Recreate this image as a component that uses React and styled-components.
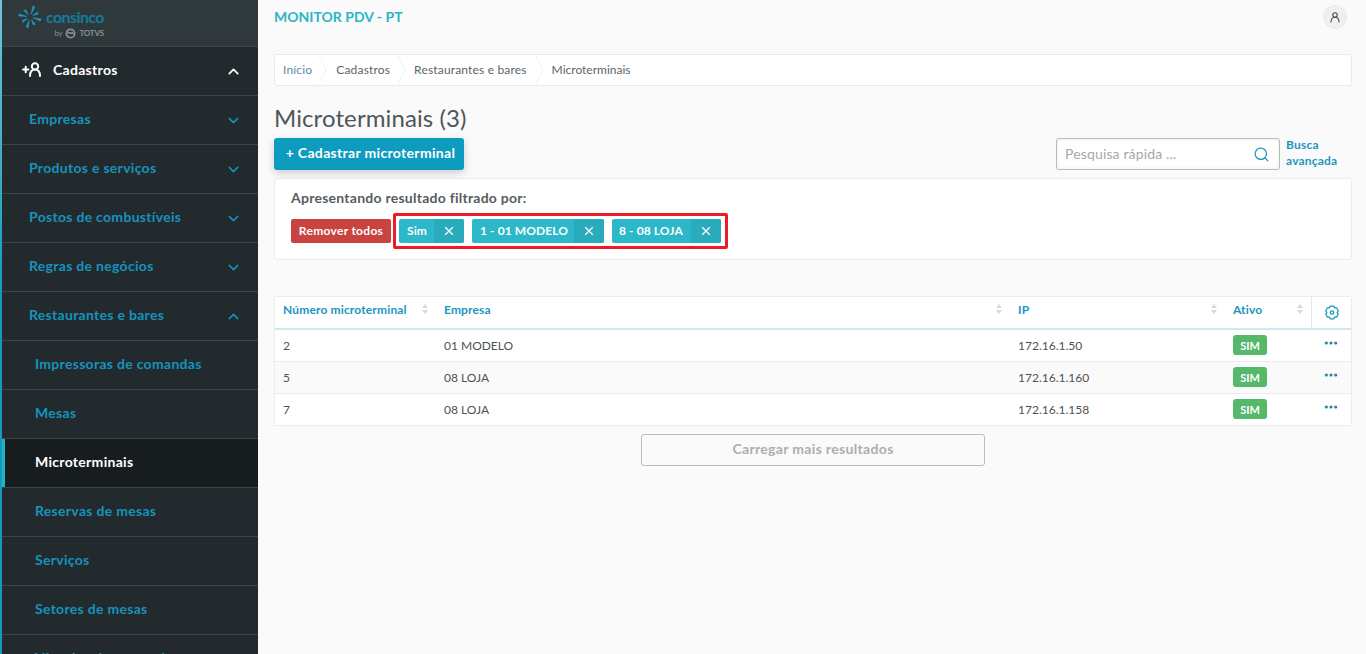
import React from "react";
import styled, { createGlobalStyle } from "styled-components";
import { ChevronDown, ChevronUp, Search, X, Ellipsis } from "lucide-react";

const GlobalStyle = createGlobalStyle`
  html, body { margin: 0; padding: 0; height: 100%; }
  body {
    font-family: Lato, "Open Sans", sans-serif;
    background: #fafafa;
    overflow: hidden;
  }
`;

const Layout = styled.div`
  display: flex;
  width: 1366px;
  height: 654px;
  overflow: hidden;
`;

const Sidebar = styled.aside`
  width: 258px;
  flex: none;
  height: 654px;
  overflow: hidden;
  background: #232a2d;
  border-left: 2px solid;
  border-image: linear-gradient(#6fc6d8, #1899b9 45%) 1;
  box-sizing: border-box;
`;

const LogoBar = styled.div`
  height: 47px;
  box-sizing: border-box;
  background: #2f393c;
  border-bottom: 1px solid #3c4649;
  display: flex;
  padding: 5px 0 0 16px;
  gap: 4px;
`;

const LogoWords = styled.div`
  display: flex;
  flex-direction: column;
  align-items: flex-end;
`;

const LogoName = styled.span`
  color: #17799c;
  font-size: 16px;
  font-weight: 700;
  letter-spacing: -0.6px;
  line-height: 16px;
  margin-top: 4px;
`;

const LogoBy = styled.span`
  display: flex;
  align-items: center;
  gap: 3px;
  color: #8a9194;
  font-size: 8px;
  font-weight: 700;
  letter-spacing: -0.2px;
  margin-top: 3px;
  line-height: 11px;
`;

const LogoSmall = styled.span`
  font-size: 7.5px;
  font-weight: 400;
  letter-spacing: 0;
`;

const MenuRow = styled.div`
  height: 49px;
  box-sizing: border-box;
  display: flex;
  align-items: center;
  justify-content: space-between;
  padding: 0 16px 3px ${(p) => (p.$sub ? 33 : 27)}px;
  border-bottom: 1px solid #3b4447;
  color: ${(p) => (p.$active ? "#fff" : "#1593bd")};
  background: ${(p) => (p.$active ? "#171c1f" : "transparent")};
  font-size: 14px;
  font-weight: 700;
  letter-spacing: 0.3px;
  box-shadow: ${(p) => (p.$active ? "inset 3px 0 0 #22b3c4" : "none")};
`;

const TopRow = styled(MenuRow)`
  color: #fff;
  padding-left: 20px;
`;

const TopLabel = styled.span`
  display: flex;
  align-items: center;
  gap: 11px;
`;

const Chevron = styled.span`
  display: flex;
  margin-top: 3px;
`;

const Main = styled.main`
  flex: 1;
  min-width: 0;
  padding: 0 14px 0 16px;
`;

const TopBar = styled.header`
  height: 36px;
  box-sizing: border-box;
  display: flex;
  align-items: center;
  justify-content: space-between;
  padding: 0 5px 2px 0;
  margin-bottom: 18px;
`;

const AppTitle = styled.span`
  color: #2bb5c6;
  font-size: 14px;
  font-weight: 700;
  margin-top: -2px;
`;

const Avatar = styled.span`
  width: 24px;
  height: 24px;
  border-radius: 50%;
  background: #f0f0f0;
  border: 1px solid #e8e8e8;
  box-sizing: border-box;
  display: flex;
  align-items: center;
  justify-content: center;
`;

const Breadcrumb = styled.nav`
  height: 32px;
  box-sizing: border-box;
  background: #fff;
  border: 1px solid #eaeaea;
  border-radius: 3px;
  display: flex;
  align-items: center;
  font-size: 12px;
  overflow: hidden;
`;

const Crumb = styled.span`
  position: relative;
  height: 100%;
  box-sizing: border-box;
  display: flex;
  align-items: center;
  padding: 0 ${(p) => p.$pr}px 2px ${(p) => p.$pl}px;
  color: ${(p) => (p.$link ? "#5b8aa5" : "#5c6468")};
  letter-spacing: ${(p) => (p.$last ? "0" : "0.17px")};
  &::after {
    content: "";
    display: ${(p) => (p.$last ? "none" : "block")};
    position: absolute;
    right: 0;
    top: -1px;
    width: 8px;
    height: 32px;
    background:
      linear-gradient(to top right, transparent 49%, #e6e6e6 49%, #e6e6e6 53%, transparent 53%) top / 100% 50% no-repeat,
      linear-gradient(to bottom right, transparent 49%, #e6e6e6 49%, #e6e6e6 53%, transparent 53%) bottom / 100% 50% no-repeat;
  }
`;

const PageTitle = styled.h1`
  margin: 17px 0 0;
  font-size: 24px;
  line-height: 30px;
  font-weight: 400;
  letter-spacing: 0.1px;
  color: #4e565a;
`;

const ActionRow = styled.div`
  display: flex;
  justify-content: space-between;
  align-items: flex-start;
  margin-top: 5px;
  height: 40px;
`;

const PrimaryButton = styled.button`
  width: 190px;
  height: 32px;
  border: 0;
  border-radius: 3px;
  background: #0d9bc0;
  color: #fff;
  font: 700 14px Lato, sans-serif;
  letter-spacing: 0.33px;
  box-shadow: 0 3px 8px rgba(0, 0, 0, 0.18);
  padding: 0 0 4px 3px;
`;

const SearchArea = styled.div`
  display: flex;
  gap: 6px;
  padding-right: 14px;
`;

const SearchBox = styled.div`
  width: 224px;
  height: 32px;
  box-sizing: border-box;
  background: #fff;
  border: 1px solid #b5bebf;
  border-radius: 3px;
  box-shadow: inset 0 0 4px rgba(0, 0, 0, 0.08);
  display: flex;
  align-items: center;
  justify-content: space-between;
  padding: 0 9px 2px 8px;
  font-size: 14px;
  color: #a5a9ab;
  letter-spacing: 0.15px;
`;

const SearchIcon = styled(Search)`
  margin-top: 2px;
`;

const AdvancedLink = styled.span`
  width: 52px;
  color: #1d96bd;
  font-size: 12px;
  font-weight: 700;
  letter-spacing: 0.2px;
  line-height: 16px;
  margin-top: -1px;
`;

const FilterCard = styled.section`
  height: 82px;
  box-sizing: border-box;
  background: #fff;
  border: 1px solid #ececec;
  border-radius: 3px;
  padding: 11px 16px 0;
`;

const FilterTitle = styled.div`
  font-size: 14px;
  font-weight: 700;
  letter-spacing: 0.25px;
  color: #565d60;
  line-height: 16px;
`;

const FilterRow = styled.div`
  display: flex;
  align-items: center;
  margin-top: 7px;
  gap: 2px;
`;

const RemoveAll = styled.span`
  width: 100px;
  height: 24px;
  box-sizing: border-box;
  padding-bottom: 2px;
  border-radius: 2px;
  background: #c9433f;
  color: #fff;
  font-size: 12px;
  font-weight: 700;
  letter-spacing: 0.3px;
  display: flex;
  align-items: center;
  justify-content: center;
`;

const Highlight = styled.div`
  display: flex;
  gap: 8px;
  border: 3px solid #ed1c24;
  border-radius: 2px;
  padding: 3px 4px 3px 3px;
  height: 36px;
  box-sizing: border-box;
`;

const Tag = styled.span`
  display: flex;
  height: 24px;
  border-radius: 2px;
  overflow: hidden;
  background: #2cb8c8;
  color: #fff;
  font-size: 12px;
  font-weight: 700;
  letter-spacing: 0.1px;
`;

const TagText = styled.span`
  width: ${(p) => p.$w}px;
  box-sizing: border-box;
  display: flex;
  align-items: center;
  padding: 0 0 2px ${(p) => p.$pl}px;
`;

const TagClose = styled.span`
  width: 30px;
  background: #2aabbb;
  display: flex;
  align-items: center;
  justify-content: center;
`;

const TableCard = styled.div`
  margin-top: 36px;
  background: #fff;
  border: 1px solid #ececec;
  border-radius: 3px;
  font-size: 12px;
`;

const Row = styled.div`
  display: grid;
  grid-template-columns: 161px 574px 215px 86px 1fr;
  height: ${(p) => (p.$head ? "33px" : p.$last ? "31px" : "32px")};
  box-sizing: border-box;
  align-items: center;
  background: ${(p) => (p.$alt ? "#fafafa" : "#fff")};
  border-bottom: ${(p) => (p.$head ? "2px solid #cdeaf1" : p.$last ? "0" : "1px solid #ececec")};
  color: #4c5356;
`;

const HeadCell = styled.div`
  height: 100%;
  box-sizing: border-box;
  display: flex;
  align-items: center;
  justify-content: ${(p) => (p.$center ? "center" : "space-between")};
  padding: ${(p) => (p.$center ? "0" : "0 8px 7px 8px")};
  color: #1d96bd;
  font-weight: 700;
  font-size: 12px;
  letter-spacing: 0.15px;
  border-left: ${(p) => (p.$center ? "1px solid #e6e6e6" : "0")};
`;

const SortMark = styled.span`
  display: flex;
  flex-direction: column;
  gap: 2px;
  &::before, &::after {
    content: "";
    width: 0;
    height: 0;
    border-left: 3.5px solid transparent;
    border-right: 3.5px solid transparent;
  }
  &::before { border-bottom: 4px solid #d6d9da; }
  &::after { border-top: 4px solid #d6d9da; }
`;

const Cell = styled.div`
  padding: 0 8px;
  display: flex;
  align-items: center;
`;

const DotsCell = styled.div`
  display: flex;
  justify-content: center;
  align-self: start;
  padding-top: 5px;
  color: #2a7fa0;
`;

const Badge = styled.span`
  width: 34px;
  height: 20px;
  margin-top: -1px;
  border-radius: 3px;
  background: #55b96b;
  color: #fff;
  font-size: 11px;
  font-weight: 700;
  display: flex;
  align-items: center;
  justify-content: center;
`;

const MoreRow = styled.div`
  display: flex;
  justify-content: center;
  margin-top: 8px;
`;

const MoreButton = styled.button`
  width: 344px;
  height: 32px;
  background: transparent;
  border: 1px solid #b9bfc0;
  border-radius: 3px;
  color: #a9afb1;
  font: 700 14px Lato, sans-serif;
  letter-spacing: 0.33px;
  padding: 0 0 4px;
`;

const menu = [
  { label: "Empresas", chevron: "down" },
  { label: "Produtos e serviços", chevron: "down" },
  { label: "Postos de combustíveis", chevron: "down" },
  { label: "Regras de negócios", chevron: "down" },
  { label: "Restaurantes e bares", chevron: "up" },
  { label: "Impressoras de comandas", sub: true },
  { label: "Mesas", sub: true },
  { label: "Microterminais", sub: true, active: true },
  { label: "Reservas de mesas", sub: true },
  { label: "Serviços", sub: true },
  { label: "Setores de mesas", sub: true },
  { label: "Vínculos de comandas", sub: true },
];

const rows = [
  { id: "2", empresa: "01 MODELO", ip: "172.16.1.50" },
  { id: "5", empresa: "08 LOJA", ip: "172.16.1.160" },
  { id: "7", empresa: "08 LOJA", ip: "172.16.1.158" },
];

const tags = [
  { label: "Sim", w: 35, pl: 8 },
  { label: "1 - 01 MODELO", w: 102, pl: 8 },
  { label: "8 - 08 LOJA", w: 79, pl: 7 },
];

const logoRays = [
  [20, 11.5], [62, 9], [105, 11.5], [150, 9], [195, 11], [238, 9], [280, 11.5], [322, 9],
];

function LogoMark() {
  return (
    <svg width="24" height="24" viewBox="0 0 24 24">
      {logoRays.map(([a, r]) => (
        <path key={a} d={`M12 ${12 - 3} L11 ${12 - r} L13.2 ${12 - r + 0.6} Z`} fill="#1b9dbf" stroke="#1b9dbf" strokeWidth="0.5" strokeLinejoin="round" transform={`rotate(${a} 12 12)`} />
      ))}
    </svg>
  );
}

function AddUserIcon() {
  return (
    <svg width="20" height="15" viewBox="0 0 20 15" fill="none" stroke="#fff" strokeWidth="2" strokeLinecap="round">
      <path d="M1 7.5h5.4M3.7 4.8v5.4" />
      <circle cx="13" cy="4.4" r="3.2" />
      <path d="M8 14c0-4 1.6-6.6 5-6.6S18 10 18 14" />
    </svg>
  );
}

function AvatarIcon() {
  return (
    <svg width="10" height="11" viewBox="0 0 10 11" fill="none" stroke="#4a4f52" strokeWidth="1.1" strokeLinecap="round">
      <circle cx="5" cy="3" r="2.2" />
      <path d="M1 10c0-3 1.4-4.8 4-4.8S9 7 9 10" />
    </svg>
  );
}

function GearIcon() {
  return (
    <svg width="14" height="15" viewBox="0 0 14 15" fill="none" stroke="#1d96bd" strokeWidth="1.3" strokeLinejoin="round">
      <path d="M5.2 1.2h3.6l.8 1.7 1.9-.1 1.7 3-1.1 1.7 1.1 1.7-1.7 3-1.9-.1-.8 1.7H5.2l-.8-1.7-1.9.1-1.7-3 1.1-1.7-1.1-1.7 1.7-3 1.9.1z" />
      <circle cx="7" cy="7.5" r="1.7" />
    </svg>
  );
}

function App() {
  return (
    <Layout>
      <GlobalStyle />
      <Sidebar>
        <LogoBar>
          <LogoMark />
          <LogoWords>
            <LogoName>consinco</LogoName>
            <LogoBy>
              <LogoSmall>by</LogoSmall>
              <svg width="11" height="11" viewBox="0 0 11 11" fill="none" stroke="#8a9194" strokeWidth="1.7">
                <circle cx="5.5" cy="5.5" r="4.2" />
                <path d="M2.5 5c2 -.8 4 .8 6 0" />
              </svg>
              TOTVS
            </LogoBy>
          </LogoWords>
        </LogoBar>
        <TopRow>
          <TopLabel>
            <AddUserIcon />
            Cadastros
          </TopLabel>
          <Chevron>
            <ChevronUp size={17} strokeWidth={2.4} />
          </Chevron>
        </TopRow>
        {menu.map((m) => (
          <MenuRow key={m.label} $sub={m.sub} $active={m.active}>
            {m.label}
            {m.chevron && (
              <Chevron>
                {m.chevron === "down" ? <ChevronDown size={17} /> : <ChevronUp size={17} />}
              </Chevron>
            )}
          </MenuRow>
        ))}
      </Sidebar>
      <Main>
        <TopBar>
          <AppTitle>MONITOR PDV - PT</AppTitle>
          <Avatar>
            <AvatarIcon />
          </Avatar>
        </TopBar>
        <Breadcrumb>
          <Crumb $link $pl={8} $pr={14}>Início</Crumb>
          <Crumb $pl={10} $pr={15}>Cadastros</Crumb>
          <Crumb $pl={9} $pr={16}>Restaurantes e bares</Crumb>
          <Crumb $last $pl={9} $pr={14}>Microterminais</Crumb>
        </Breadcrumb>
        <PageTitle>Microterminais (3)</PageTitle>
        <ActionRow>
          <PrimaryButton>+ Cadastrar microterminal</PrimaryButton>
          <SearchArea>
            <SearchBox>
              Pesquisa rápida ...
              <SearchIcon size={17} color="#1d96bd" strokeWidth={1.75} />
            </SearchBox>
            <AdvancedLink>
              Busca
              <br />
              avançada
            </AdvancedLink>
          </SearchArea>
        </ActionRow>
        <FilterCard>
          <FilterTitle>Apresentando resultado filtrado por:</FilterTitle>
          <FilterRow>
            <RemoveAll>Remover todos</RemoveAll>
            <Highlight>
              {tags.map((t) => (
                <Tag key={t.label}>
                  <TagText $w={t.w} $pl={t.pl}>{t.label}</TagText>
                  <TagClose>
                    <X size={14} />
                  </TagClose>
                </Tag>
              ))}
            </Highlight>
          </FilterRow>
        </FilterCard>
        <TableCard>
          <Row $head>
            <HeadCell>Número microterminal<SortMark /></HeadCell>
            <HeadCell>Empresa<SortMark /></HeadCell>
            <HeadCell>IP<SortMark /></HeadCell>
            <HeadCell>Ativo<SortMark /></HeadCell>
            <HeadCell $center><GearIcon /></HeadCell>
          </Row>
          {rows.map((r, i) => (
            <Row key={r.id} $alt={i === 1} $last={i === 2}>
              <Cell>{r.id}</Cell>
              <Cell>{r.empresa}</Cell>
              <Cell>{r.ip}</Cell>
              <Cell><Badge>SIM</Badge></Cell>
              <DotsCell><Ellipsis size={16} strokeWidth={2.8} /></DotsCell>
            </Row>
          ))}
        </TableCard>
        <MoreRow>
          <MoreButton>Carregar mais resultados</MoreButton>
        </MoreRow>
      </Main>
    </Layout>
  );
}

export default App;
